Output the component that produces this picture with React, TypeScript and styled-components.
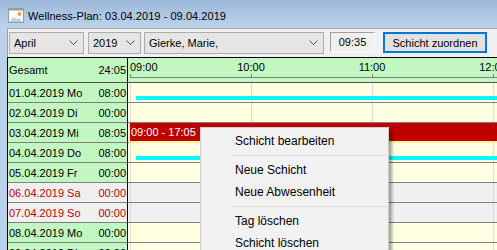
import React from 'react';
import styled, { createGlobalStyle } from 'styled-components';

const GlobalStyle = createGlobalStyle`
    html, body {
        margin: 0;
        padding: 0;
    }
    body {
        font-family: "Liberation Sans", Arial, sans-serif;
        font-size: 11px;
        color: #000;
        background: #b9d1ea;
    }
`;

const HOUR = 121;
const timeX = (minutes: number) => 2 + ((minutes - 540) / 60) * HOUR;

const Window = styled.div`
    position: relative;
    width: 497px;
    height: 250px;
    overflow: hidden;
    background: #b9d1ea;
`;

const TitleBar = styled.div`
    height: 28px;
    display: flex;
    align-items: center;
    padding: 3px 0 0 8px;
    box-sizing: border-box;
    gap: 4px;
    background: linear-gradient(#9cb7d8, #bdd4ec);
`;

const TitleText = styled.span`
    font-size: 11px;
    letter-spacing: 0.05px;
`;

const Client = styled.div`
    margin-left: 7px;
    height: 222px;
    background: #f0f0f0;
    border-top: 1px solid #a0a0a0;
    border-left: 1px solid #a0a0a0;
`;

const Toolbar = styled.div`
    display: flex;
    align-items: flex-start;
    padding: 3px 0 0 1px;
    height: 28px;
    box-sizing: border-box;
`;

const Combo = styled.div<{ $w: number; $gap: number }>`
    width: ${(p) => p.$w}px;
    height: 22px;
    margin-right: ${(p) => p.$gap}px;
    box-sizing: border-box;
    border: 1px solid #adadad;
    background: #e5e5e5;
    display: flex;
    align-items: center;
    justify-content: space-between;
    padding: 0 5px 0 4px;
`;

const TimeBox = styled.div`
    width: 45px;
    height: 20px;
    margin-right: 8px;
    box-sizing: border-box;
    border: 1px solid;
    border-color: #a0a0a0 #ffffff #ffffff #a0a0a0;
    background: #f0f0f0;
    display: flex;
    align-items: center;
    justify-content: center;
`;

const Button = styled.div`
    width: 104px;
    height: 21px;
    box-sizing: border-box;
    border: 2px solid #0078d7;
    background: #e1e1e1;
    display: flex;
    align-items: center;
    justify-content: center;
`;

const Grid = styled.div`
    margin-left: -1px;
    border-top: 1px solid #000;
    border-left: 1px solid #000;
`;

const Row = styled.div`
    display: flex;
    height: 20px;
`;

const HeaderRow = styled(Row)`
    height: 25px;
`;

const LeftCell = styled.div<{ $weekend?: boolean }>`
    width: 120px;
    flex: none;
    box-sizing: border-box;
    padding: 0 1px 0 1px;
    display: flex;
    align-items: center;
    justify-content: space-between;
    background: ${(p) => (p.$weekend ? '#f0f0f0' : '#c1f8c1')};
    color: ${(p) => (p.$weekend ? '#c00000' : '#000')};
    border-right: 1px solid #000;
    border-bottom: 1px solid #808080;
`;

const HeaderLeft = styled(LeftCell)`
    border-bottom-color: #505050;
`;

const TimeCell = styled.div<{ $weekend?: boolean }>`
    position: relative;
    flex: 1;
    box-sizing: border-box;
    border-bottom: 1px solid #808080;
    background-color: ${(p) => (p.$weekend ? '#f0f0f0' : '#ffffe1')};
    background-image: repeating-linear-gradient(90deg, #d8d8d8 0 1px, transparent 1px ${HOUR}px);
    background-position: 2px 0;
`;

const TimeHeader = styled.div`
    position: relative;
    flex: 1;
    box-sizing: border-box;
    background: #c1f8c1;
    border-bottom: 1px solid #505050;
`;

const HourLabel = styled.span<{ $first?: boolean }>`
    position: absolute;
    top: 3px;
    transform: ${(p) => (p.$first ? 'none' : 'translateX(-50%)')};
`;

const Ruler = styled.div`
    position: absolute;
    left: 2px;
    right: 0;
    top: 19px;
    height: 1px;
    background: #808080;
`;

const Tick = styled.div`
    position: absolute;
    top: 16px;
    width: 1px;
    height: 4px;
    background: #808080;
`;

const PlanBar = styled.div`
    position: absolute;
    top: 13px;
    right: 0;
    height: 4px;
    background: #00ffff;
`;

const ShiftBar = styled.div`
    position: absolute;
    top: 0;
    right: 0;
    bottom: -1px;
    background: #c00000;
    border-left: 1px solid #fff0a0;
    border-bottom: 2px solid #fff0a0;
    color: #fff;
    display: flex;
    align-items: center;
    padding-left: 1px;
    padding-bottom: 1px;
`;

const Menu = styled.div`
    position: absolute;
    left: 200px;
    top: 127px;
    width: 189px;
    box-sizing: border-box;
    background: #f2f2f2;
    border: 1px solid #cccccc;
    padding: 2px 0;
    box-shadow: 3px 3px 3px rgba(0, 0, 0, 0.35);
    font-size: 12px;
`;

const MenuItem = styled.div`
    height: 22px;
    display: flex;
    align-items: center;
    padding-left: 34px;
`;

const MenuSeparator = styled.div`
    height: 7px;
    display: flex;
    align-items: center;
    padding: 0 2px 0 31px;
    &::after {
        content: '';
        flex: 1;
        height: 1px;
        background: #d7d7d7;
    }
`;

const Chevron = () => (
    <svg width="9" height="6" viewBox="0 0 9 6">
        <path d="M0.5 0.5 L4.5 4.5 L8.5 0.5" fill="none" stroke="#555" strokeWidth="1" />
    </svg>
);

const AppIcon = () => (
    <svg width="16" height="15" viewBox="0 0 16 15">
        <rect x="0.5" y="0.5" width="15" height="14" fill="#fff" stroke="#9a9a9a" />
        <rect x="0.5" y="0.5" width="15" height="2" fill="#9a9a9a" />
        <circle cx="11.5" cy="6" r="2" fill="#f5a623" />
        <path d="M1 14 L5.5 9 L8.5 11.5 L10.5 10 L15 14 Z" fill="#b8cde6" />
    </svg>
);

type Day = {
    date: string;
    total: string;
    weekend?: boolean;
    plan?: number;
    shift?: [number, string];
};

const days: Day[] = [
    { date: '01.04.2019 Mo', total: '08:00', plan: 543 },
    { date: '02.04.2019 Di', total: '00:00' },
    { date: '03.04.2019 Mi', total: '08:05', shift: [540, '09:00 - 17:05'] },
    { date: '04.04.2019 Do', total: '08:00', plan: 543 },
    { date: '05.04.2019 Fr', total: '00:00' },
    { date: '06.04.2019 Sa', total: '00:00', weekend: true },
    { date: '07.04.2019 So', total: '00:00', weekend: true },
    { date: '08.04.2019 Mo', total: '00:00' },
    { date: '09.04.2019 Di', total: '00:00' },
];

const hours = ['09:00', '10:00', '11:00', '12:00'];

export default function App() {
    return (
        <Window>
            <GlobalStyle />
            <TitleBar>
                <AppIcon />
                <TitleText>Wellness-Plan: 03.04.2019 - 09.04.2019</TitleText>
            </TitleBar>
            <Client>
                <Toolbar>
                    <Combo $w={75} $gap={4}>
                        <span>April</span>
                        <Chevron />
                    </Combo>
                    <Combo $w={53} $gap={3}>
                        <span>2019</span>
                        <Chevron />
                    </Combo>
                    <Combo $w={180} $gap={6}>
                        <span>Gierke, Marie,</span>
                        <Chevron />
                    </Combo>
                    <TimeBox>09:35</TimeBox>
                    <Button>Schicht zuordnen</Button>
                </Toolbar>
                <Grid>
                    <HeaderRow>
                        <HeaderLeft>
                            <span>Gesamt</span>
                            <span>24:05</span>
                        </HeaderLeft>
                        <TimeHeader>
                            {hours.map((h, i) => (
                                <React.Fragment key={h}>
                                    <HourLabel $first={i === 0} style={{ left: 2 + i * HOUR }}>
                                        {h}
                                    </HourLabel>
                                    <Tick style={{ left: 2 + i * HOUR }} />
                                </React.Fragment>
                            ))}
                            <Ruler />
                        </TimeHeader>
                    </HeaderRow>
                    {days.map((d) => (
                        <Row key={d.date}>
                            <LeftCell $weekend={d.weekend}>
                                <span>{d.date}</span>
                                <span>{d.total}</span>
                            </LeftCell>
                            <TimeCell $weekend={d.weekend}>
                                {d.plan && <PlanBar style={{ left: timeX(d.plan) }} />}
                                {d.shift && (
                                    <ShiftBar style={{ left: timeX(d.shift[0]) - 1 }}>{d.shift[1]}</ShiftBar>
                                )}
                            </TimeCell>
                        </Row>
                    ))}
                </Grid>
            </Client>
            <Menu>
                <MenuItem>Schicht bearbeiten</MenuItem>
                <MenuSeparator />
                <MenuItem>Neue Schicht</MenuItem>
                <MenuItem>Neue Abwesenheit</MenuItem>
                <MenuSeparator />
                <MenuItem>Tag löschen</MenuItem>
                <MenuItem>Schicht löschen</MenuItem>
            </Menu>
        </Window>
    );
}
